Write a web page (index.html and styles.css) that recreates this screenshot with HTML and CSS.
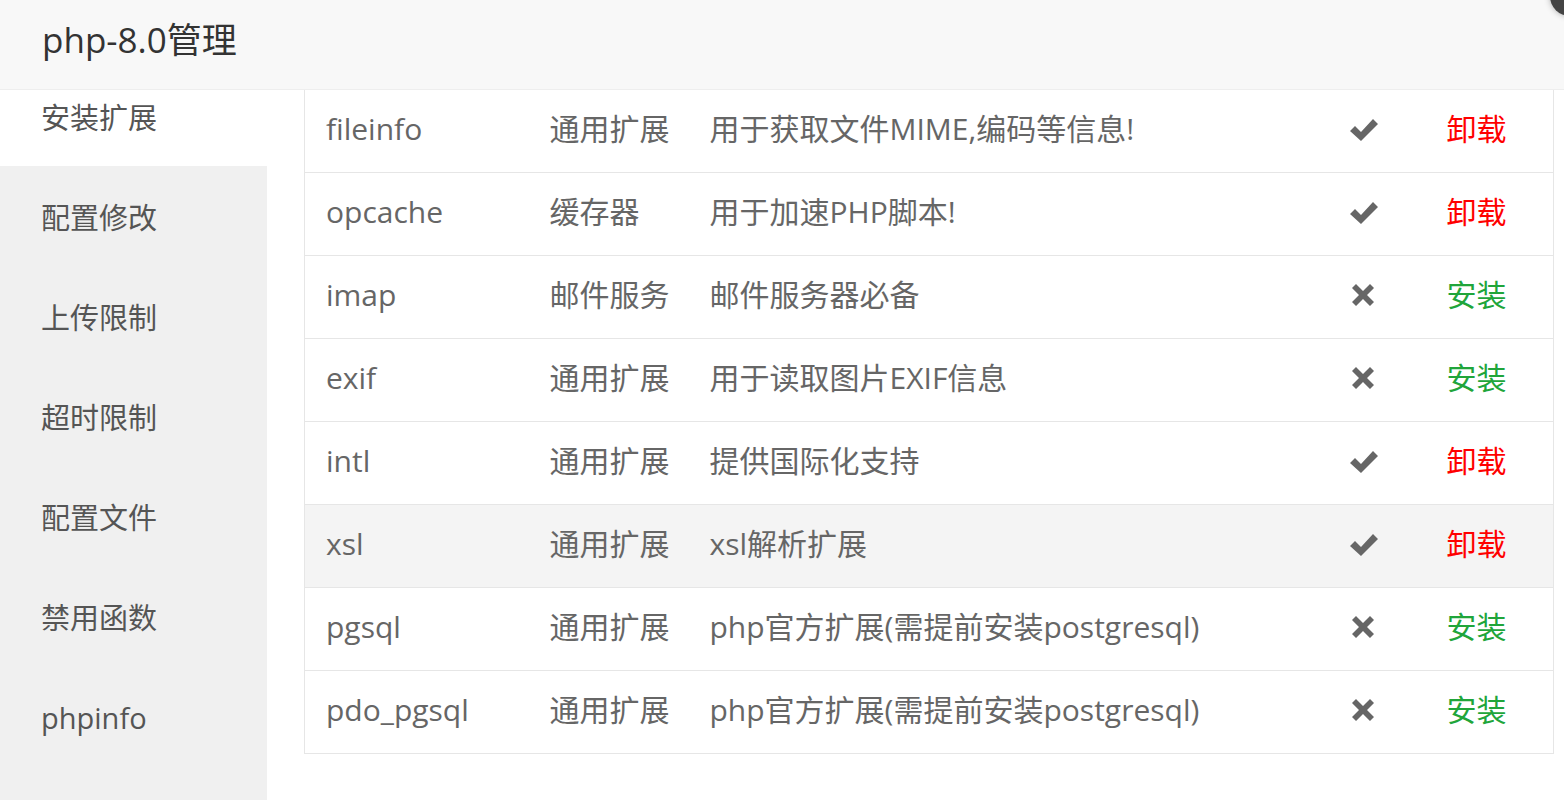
FILE: index.html
```html
<!DOCTYPE html>
<html lang="zh-CN">
<head>
<meta charset="utf-8">
<title>php-8.0管理</title>
<link rel="stylesheet" href="styles.css">
</head>
<body>
<div class="layer">
	<div class="layer-title">php-8.0管理</div>
	<span class="layer-close"></span>
	<div class="layer-body">
		<ul class="menu">
			<li class="on">安装扩展</li>
			<li>配置修改</li>
			<li>上传限制</li>
			<li>超时限制</li>
			<li>配置文件</li>
			<li>禁用函数</li>
			<li>phpinfo</li>
		</ul>
		<div class="content">
			<table class="ext-table">
				<colgroup>
					<col class="c-name"><col class="c-type"><col class="c-desc"><col class="c-stat"><col class="c-act">
				</colgroup>
				<tbody>
				<tr>
					<td>fileinfo</td><td>通用扩展</td><td>用于获取文件MIME,编码等信息!</td>
					<td><svg class="ico" viewBox="0 0 32 26"><path d="M2 15l5-5 6 6L25 3l5 5-17 17z"/></svg></td>
					<td><a class="btn-del">卸载</a></td>
				</tr>
				<tr>
					<td>opcache</td><td>缓存器</td><td>用于加速PHP脚本!</td>
					<td><svg class="ico" viewBox="0 0 32 26"><path d="M2 15l5-5 6 6L25 3l5 5-17 17z"/></svg></td>
					<td><a class="btn-del">卸载</a></td>
				</tr>
				<tr>
					<td>imap</td><td>邮件服务</td><td>邮件服务器必备</td>
					<td><svg class="ico" viewBox="0 0 32 26"><path d="M4 6l4-4 7 7 7-7 4 4-7 7 7 7-4 4-7-7-7 7-4-4 7-7z"/></svg></td>
					<td><a class="btn-add">安装</a></td>
				</tr>
				<tr>
					<td>exif</td><td>通用扩展</td><td>用于读取图片EXIF信息</td>
					<td><svg class="ico" viewBox="0 0 32 26"><path d="M4 6l4-4 7 7 7-7 4 4-7 7 7 7-4 4-7-7-7 7-4-4 7-7z"/></svg></td>
					<td><a class="btn-add">安装</a></td>
				</tr>
				<tr>
					<td>intl</td><td>通用扩展</td><td>提供国际化支持</td>
					<td><svg class="ico" viewBox="0 0 32 26"><path d="M2 15l5-5 6 6L25 3l5 5-17 17z"/></svg></td>
					<td><a class="btn-del">卸载</a></td>
				</tr>
				<tr class="hover">
					<td>xsl</td><td>通用扩展</td><td>xsl解析扩展</td>
					<td><svg class="ico" viewBox="0 0 32 26"><path d="M2 15l5-5 6 6L25 3l5 5-17 17z"/></svg></td>
					<td><a class="btn-del">卸载</a></td>
				</tr>
				<tr>
					<td>pgsql</td><td>通用扩展</td><td>php官方扩展(需提前安装postgresql)</td>
					<td><svg class="ico" viewBox="0 0 32 26"><path d="M4 6l4-4 7 7 7-7 4 4-7 7 7 7-4 4-7-7-7 7-4-4 7-7z"/></svg></td>
					<td><a class="btn-add">安装</a></td>
				</tr>
				<tr>
					<td>pdo_pgsql</td><td>通用扩展</td><td>php官方扩展(需提前安装postgresql)</td>
					<td><svg class="ico" viewBox="0 0 32 26"><path d="M4 6l4-4 7 7 7-7 4 4-7 7 7 7-4 4-7-7-7 7-4-4 7-7z"/></svg></td>
					<td><a class="btn-add">安装</a></td>
				</tr>
				</tbody>
			</table>
		</div>
	</div>
</div>
</body>
</html>
```

FILE: styles.css
```css
html,body,div,ul,li,table,td{margin:0;padding:0;}
ul{list-style-type:none;}
body{background:#fff;font:30px/1.4 "Open Sans","Noto Sans CJK SC",sans-serif;color:#666;height:800px;overflow:hidden;}
.layer{position:relative;height:800px;overflow:hidden;}
.layer-title{position:relative;z-index:1;height:89px;line-height:80px;padding-left:42px;font-size:35px;color:#333;background:#f8f8f8;border-bottom:1px solid #eee;}
.layer-close{position:absolute;z-index:2;top:-24px;right:-26px;width:40px;height:40px;border-radius:50%;background:#444;box-shadow:0 0 6px rgba(0,0,0,.3);}
.layer-body{display:flex;align-items:flex-start;}
.menu{width:267px;height:740px;margin-top:-24px;background:#f0f0f0;flex-shrink:0;}
.menu li{height:100px;line-height:104px;padding-left:41px;color:#555;font-size:29px;}
.menu li.on{background:#fff;}
.content{padding-left:37px;}
.ext-table{width:1249px;border-collapse:collapse;table-layout:fixed;border:1px solid #e6e6e6;border-top:0;}
.ext-table col.c-name{width:224px;}
.ext-table col.c-type{width:160px;}
.ext-table col.c-desc{width:638px;}
.ext-table col.c-stat{width:99px;}
.ext-table col.c-act{width:128px;}
.ext-table td{height:78px;padding:0 0 4px 21px;border-bottom:1px solid #e6e6e6;white-space:nowrap;vertical-align:middle;}
.ext-table tr.hover td{background:#f4f4f4;}
.ext-table .ico{display:block;width:32px;height:26px;fill:#666;}
.btn-del{color:#f00;}
.btn-add{color:#20a53a;}
```
